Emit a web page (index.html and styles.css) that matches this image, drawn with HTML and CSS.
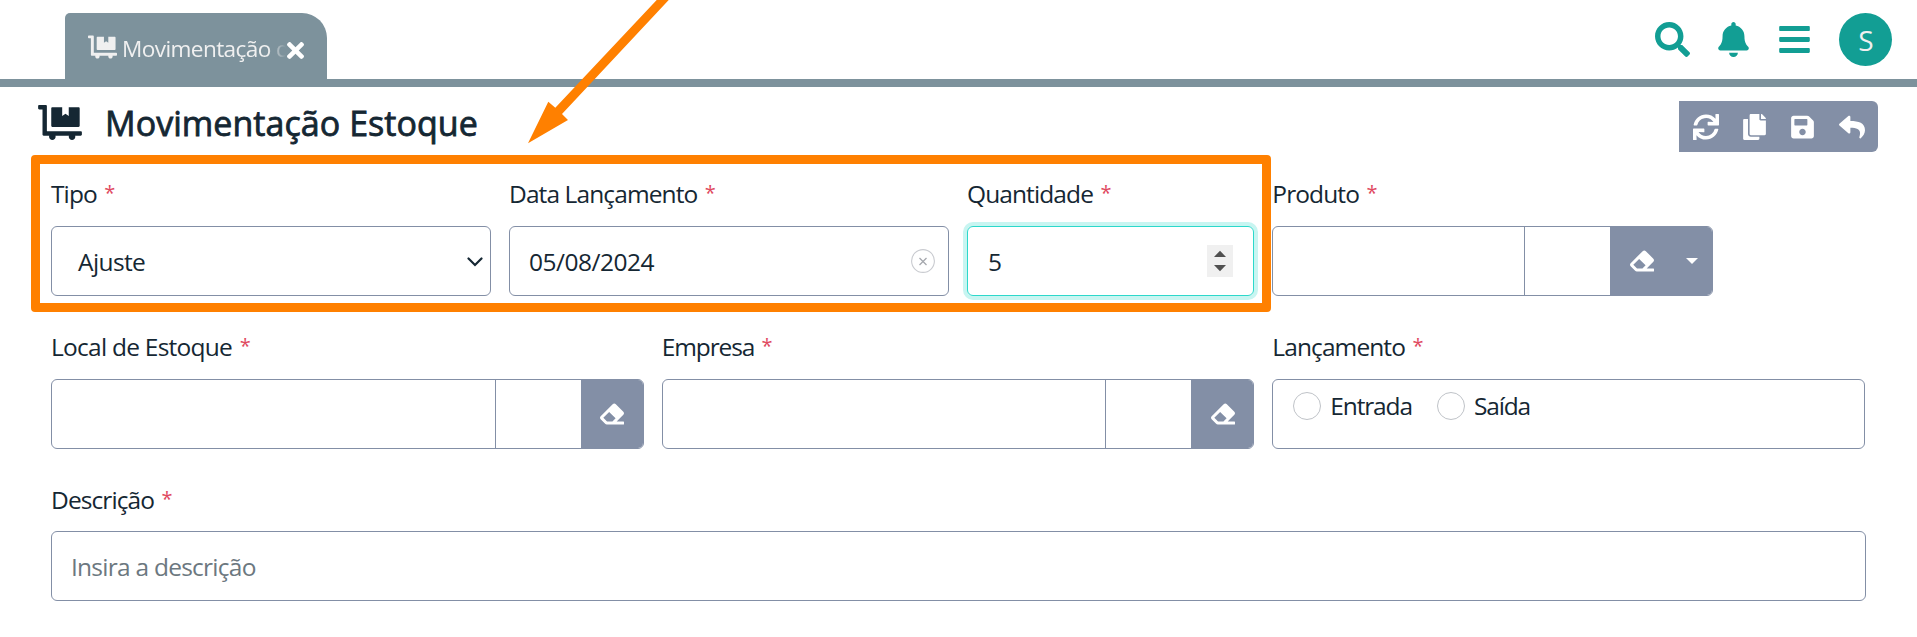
FILE: index.html
```html
<!DOCTYPE html>
<html lang="pt-BR">
<head>
<meta charset="utf-8">
<title>Movimentação Estoque</title>
<link rel="stylesheet" href="styles.css">
</head>
<body>
<svg class="defs" aria-hidden="true">
  <symbol id="dolly" viewBox="0 0 640 512"><path d="M208 320h384c8.800 0 16-7.200 16-16V48c0-8.800-7.200-16-16-16H448v128l-48-32-48 32V32H208c-8.800 0-16 7.200-16 16v256c0 8.800 7.200 16 16 16zm416 64H128V16c0-8.800-7.200-16-16-16H16C7.200 0 0 7.200 0 16v32c0 8.800 7.200 16 16 16h48v368c0 8.800 7.200 16 16 16h82.900c-1.800 5-2.900 10.400-2.900 16 0 26.500 21.500 48 48 48s48-21.500 48-48c0-5.600-1.200-11-2.900-16H451c-1.800 5-2.900 10.400-2.900 16 0 26.500 21.500 48 48 48s48-21.500 48-48c0-5.600-1.200-11-2.900-16H624c8.800 0 16-7.200 16-16v-32c0-8.800-7.200-16-16-16z"/></symbol>
  <symbol id="eraser" viewBox="0 0 512 512"><path d="M497.941 273.941c18.745-18.745 18.745-49.137 0-67.882l-160-160c-18.745-18.745-49.136-18.746-67.883 0l-256 256c-18.745 18.745-18.745 49.137 0 67.882l96 96A48.004 48.004 0 0 0 144 480h356c6.627 0 12-5.373 12-12v-40c0-6.627-5.373-12-12-12H355.883l142.058-142.059zm-302.627-62.627l137.373 137.373L265.373 416H150.628l-80-80 124.686-124.686z"/></symbol>
</svg>

<header class="topbar">
  <div class="tab">
    <svg class="tab-icon"><use href="#dolly"/></svg>
    <span class="tab-title">Movimentação de Estoque</span>
    <svg class="tab-close" viewBox="0 0 352 512"><path d="M242.720 256l100.070-100.070c12.280-12.280 12.280-32.190 0-44.480l-22.240-22.240c-12.280-12.280-32.190-12.280-44.480 0L176 189.280 75.930 89.210c-12.280-12.280-32.190-12.280-44.480 0L9.210 111.450c-12.280 12.280-12.280 32.190 0 44.480L109.280 256 9.210 356.070c-12.280 12.280-12.280 32.190 0 44.480l22.240 22.240c12.280 12.280 32.200 12.280 44.480 0L176 322.720l100.070 100.070c12.280 12.280 32.200 12.280 44.480 0l22.240-22.240c12.280-12.280 12.280-32.190 0-44.480L242.720 256z"/></svg>
  </div>
  <nav class="actions">
    <svg class="search" viewBox="0 0 512 512"><path d="M505 442.700L405.300 343c-4.500-4.500-10.600-7-17-7H372c27.600-35.300 44-79.700 44-128C416 93.100 322.900 0 208 0S0 93.100 0 208s93.100 208 208 208c48.300 0 92.700-16.400 128-44v16.300c0 6.400 2.500 12.500 7 17l99.700 99.700c9.400 9.400 24.600 9.400 33.900 0l28.300-28.300c9.400-9.400 9.400-24.600.1-34zM208 336c-70.700 0-128-57.200-128-128 0-70.700 57.200-128 128-128 70.700 0 128 57.200 128 128 0 70.700-57.200 128-128 128z"/></svg>
    <svg class="bell" viewBox="0 0 448 512"><path d="M224 512c35.320 0 63.970-28.650 63.970-64H160.030c0 35.350 28.650 64 63.970 64zm215.390-149.710c-19.320-20.760-55.470-51.990-55.470-154.290 0-77.700-54.480-139.900-127.940-155.160V32c0-17.670-14.320-32-31.980-32s-31.980 14.330-31.980 32v20.840C118.560 68.100 64.080 130.300 64.080 208c0 102.300-36.150 133.530-55.470 154.290-6 6.450-8.660 14.160-8.610 21.710.11 16.400 12.980 32 32.100 32h383.800c19.120 0 32-15.600 32.100-32 .05-7.550-2.610-15.270-8.610-21.710z"/></svg>
    <svg class="bars" viewBox="0 0 448 512"><path d="M16 132h416c8.837 0 16-7.163 16-16V76c0-8.837-7.163-16-16-16H16C7.163 60 0 67.163 0 76v40c0 8.837 7.163 16 16 16zm0 160h416c8.837 0 16-7.163 16-16v-40c0-8.837-7.163-16-16-16H16c-8.837 0-16 7.163-16 16v40c0 8.837 7.163 16 16 16zm0 160h416c8.837 0 16-7.163 16-16v-40c0-8.837-7.163-16-16-16H16c-8.837 0-16 7.163-16 16v40c0 8.837 7.163 16 16 16z"/></svg>
    <span class="avatar">S</span>
  </nav>
</header>

<main>
  <div class="heading">
    <svg class="heading-icon"><use href="#dolly"/></svg>
    <h1>Movimentação Estoque</h1>
    <div class="toolbar">
      <svg class="sync" viewBox="0 0 512 512"><path d="M440.650 12.570l4 82.770A247.160 247.160 0 0 0 255.830 8C134.730 8 33.910 94.920 12.290 209.820A12 12 0 0 0 24.090 224h49.050a12 12 0 0 0 11.670-9.260 175.910 175.910 0 0 1 317-56.940l-101.460-4.860a12 12 0 0 0-12.570 12v47.410a12 12 0 0 0 12 12H500a12 12 0 0 0 12-12V12a12 12 0 0 0-12-12h-47.370a12 12 0 0 0-11.980 12.570zM255.830 432a175.610 175.610 0 0 1-146-77.800l101.800 4.870a12 12 0 0 0 12.570-12v-47.400a12 12 0 0 0-12-12H12a12 12 0 0 0-12 12V500a12 12 0 0 0 12 12h47.350a12 12 0 0 0 12-12.600l-4.150-82.570A247.170 247.170 0 0 0 255.830 504c121.110 0 221.930-86.920 243.550-201.820a12 12 0 0 0-11.800-14.180h-49.050a12 12 0 0 0-11.670 9.260A175.860 175.860 0 0 1 255.830 432z"/></svg>
      <svg class="copy" viewBox="0 0 448 512"><path d="M320 448v40c0 13.255-10.745 24-24 24H24c-13.255 0-24-10.745-24-24V120c0-13.255 10.745-24 24-24h72v296c0 30.879 25.121 56 56 56h168zm0-344V0H152c-13.255 0-24 10.745-24 24v368c0 13.255 10.745 24 24 24h272c13.255 0 24-10.745 24-24V128H344c-13.200 0-24-10.800-24-24zm120.971-31.029L375.029 7.029A24 24 0 0 0 358.059 0H352v96h96v-6.059a24 24 0 0 0-7.029-16.970z"/></svg>
      <svg class="save" viewBox="0 0 448 512"><path d="M433.941 129.941l-83.882-83.882A48 48 0 0 0 316.118 32H48C21.490 32 0 53.490 0 80v352c0 26.510 21.490 48 48 48h352c26.510 0 48-21.490 48-48V163.882a48 48 0 0 0-14.059-33.941zM224 416c-35.346 0-64-28.654-64-64 0-35.346 28.654-64 64-64s64 28.654 64 64c0 35.346-28.654 64-64 64zm96-304.520V212c0 6.627-5.373 12-12 12H76c-6.627 0-12-5.373-12-12V108c0-6.627 5.373-12 12-12h228.520c3.183 0 6.235 1.264 8.485 3.515l3.480 3.480A11.996 11.996 0 0 1 320 111.480z"/></svg>
      <svg class="reply" viewBox="0 0 512 512"><path d="M8.309 189.836L184.313 37.851C199.719 24.546 224 35.347 224 56.015v80.053c160.629 1.839 288 34.032 288 186.258 0 61.441-39.581 122.309-83.333 154.132-13.653 9.931-33.111-2.533-28.077-18.631 45.344-145.012-21.507-183.510-176.590-185.742V360c0 20.700-24.300 31.453-39.687 18.164l-176.004-152c-11.071-9.562-11.086-26.753 0-36.328z"/></svg>
    </div>
  </div>

  <form class="form">
    <div class="field span3">
      <label>Tipo <i>*</i></label>
      <div class="control select">Ajuste
        <svg class="chevron" viewBox="0 0 16 10"><path d="M1.500 1.500L8 8l6.500-6.500"/></svg></div>
    </div>
    <div class="field span3">
      <label>Data Lançamento <i>*</i></label>
      <div class="control date">05/08/2024
        <svg class="clear" viewBox="0 0 24 24"><circle cx="12" cy="12" r="11.400"/><path d="M8.500 9l7 7M15.500 9l-7 7"/></svg></div>
    </div>
    <div class="field span2">
      <label>Quantidade <i>*</i></label>
      <div class="control number">5
        <svg class="spinner" viewBox="0 0 26 32"><path d="M7 12l6-6.300 6 6.300zM7 20l6 6.300 6-6.300z"/></svg></div>
    </div>
    <div class="field produto">
      <label>Produto <i>*</i></label>
      <div class="control group">
        <div class="code"></div><div class="name"></div>
        <div class="erase"><svg class="eraser"><use href="#eraser"/></svg></div>
        <div class="drop"><svg class="caret" viewBox="0 0 12 6"><path d="M0 0h12L6 6z"/></svg></div>
      </div>
    </div>
    <div class="field span4 local">
      <label>Local de Estoque <i>*</i></label>
      <div class="control group">
        <div class="code"></div><div class="name"></div>
        <div class="erase"><svg class="eraser"><use href="#eraser"/></svg></div>
      </div>
    </div>
    <div class="field span4 empresa">
      <label>Empresa <i>*</i></label>
      <div class="control group">
        <div class="code"></div><div class="name"></div>
        <div class="erase"><svg class="eraser"><use href="#eraser"/></svg></div>
      </div>
    </div>
    <div class="field span4">
      <label>Lançamento <i>*</i></label>
      <div class="control radios">
        <div class="radio"><span class="dot"></span>Entrada</div>
        <div class="radio"><span class="dot"></span>Saída</div>
      </div>
    </div>
    <div class="field span12">
      <label>Descrição <i>*</i></label>
      <div class="control descricao">Insira a descrição</div>
    </div>
  </form>
</main>

<div class="highlight"></div>
<svg class="arrow" viewBox="0 0 1917 637"><path d="M656.700 0L555.300 107.700 548.300 101.700 528 143.300 568 120 562 114 668.700 0z"/></svg>
</body>
</html>
```

FILE: styles.css
```css
* { box-sizing: border-box; }

body {
  margin: 0;
  background: #fff;
  color: #152733;
  font-family: "Open Sans", "Noto Sans", sans-serif;
  font-size: 24.5px;
  letter-spacing: -0.9px;
  position: relative;
  height: 637px;
  overflow: hidden;
}

svg { display: block; fill: currentColor; flex: none; }
.defs { position: absolute; width: 0; height: 0; }

.topbar {
  display: flex;
  justify-content: space-between;
  align-items: flex-end;
  height: 87px;
  padding: 0 25px 0 65px;
  border-bottom: 8px solid #7d929c;
}
.tab {
  display: flex;
  align-items: center;
  width: 262px;
  height: 66px;
  padding: 4px 23px 0;
  border-radius: 5px 25px 0 0;
  background: #7d929c;
  color: #f0f0f0;
  font-size: 22.6px;
  letter-spacing: -0.6px;
}
.tab-icon { width: 29px; height: 24px; margin: -2px 5px 0 0; }
.tab-title {
  width: 164px;
  overflow: hidden;
  white-space: nowrap;
  -webkit-mask-image: linear-gradient(90deg, #000 146px, transparent 164px);
  mask-image: linear-gradient(90deg, #000 146px, transparent 164px);
}
.tab-close { width: 17px; height: 25px; margin: 4px 0 0 1px; color: #fff; }

.actions { display: flex; align-items: center; height: 53px; margin-bottom: 13px; color: #129e94; }
.search { width: 35px; height: 35px; margin-right: 28px; }
.bell { width: 31px; height: 35px; margin-right: 30px; }
.bars { width: 31px; height: 35px; margin-right: 29px; }
.avatar {
  width: 53px;
  height: 53px;
  border-radius: 50%;
  background: #129e94;
  color: #f0f0f0;
  font-size: 28px;
  line-height: 55px;
  text-align: center;
}

.heading { display: flex; height: 83px; padding: 14px 39px 0 38px; }
.heading-icon { width: 44px; height: 35px; margin: 4px 23px 0 0; }
h1 {
  flex: 1;
  margin: 0;
  font-size: 34px;
  font-weight: 400;
  line-height: 44px;
  letter-spacing: 0.05px;
  -webkit-text-stroke: 0.8px currentColor;
}
.toolbar {
  display: flex;
  align-items: center;
  width: 199px;
  height: 51px;
  padding-left: 14px;
  border-radius: 0 6px 6px 0;
  background: #838fa6;
  color: #fff;
}
.toolbar svg { height: 26px; }
.sync { width: 26px; margin-right: 24px; }
.copy { width: 23px; margin-right: 25px; }
.save { width: 23px; margin-right: 25px; }
.reply { width: 26px; }

.form {
  display: grid;
  grid-template-columns: repeat(12, 1fr);
  gap: 26.5px 18px;
  padding: 0 52px 0 51px;
}
.span2 { grid-column: span 2; }
.span3 { grid-column: span 3; }
.span4 { grid-column: span 4; }
.span12 { grid-column: span 12; margin-right: -1px; }
.produto { grid-column: span 4; width: 441px; }

label { display: block; line-height: 47px; margin-bottom: 9px; }
label i {
  margin-left: 2px;
  color: #e04a5f;
  font-size: 20px;
  font-style: normal;
  line-height: 0;
  vertical-align: 3px;
}
.local label { letter-spacing: -0.75px; }
.empresa label { letter-spacing: -1.1px; }
.span12 label { line-height: 49px; margin-bottom: 7px; }

.control {
  display: flex;
  align-items: center;
  height: 70px;
  border: 1px solid #838fa6;
  border-radius: 6px;
  padding: 1px 13px 0 19px;
}
.select { padding: 1px 7px 0 26px; letter-spacing: -0.6px; }
.date { letter-spacing: -0.5px; }
.chevron { width: 16px; height: 10px; margin: 0 0 0 auto; fill: none; stroke: #152733; stroke-width: 2.2; stroke-linecap: round; }
.clear { width: 24px; height: 24px; margin: -1px 0 0 auto; fill: none; stroke: #c9cbd0; stroke-width: 1.1; }
.clear path { stroke: #a5a8ae; stroke-width: 1.3; }
.number { padding-left: 20px; border-color: #2dd8cb; box-shadow: 0 0 0 4px #c8f5f1; }
.spinner { width: 26px; height: 32px; margin: -1px 7px 0 auto; background: #f0f0f0; fill: #505050; }

.group { padding: 0; align-items: stretch; overflow: hidden; }
.code { flex: 1; border-right: 1px solid #838fa6; }
.name { width: 85px; }
.erase, .drop { display: flex; align-items: center; justify-content: center; background: #838fa6; color: #fff; }
.erase { width: 62px; }
.drop { width: 40px; }
.eraser { width: 24px; height: 24px; margin-left: 1px; }
.caret { width: 12px; height: 6px; }

.radios { align-items: flex-start; gap: 25px; padding: 12px 20px 0; letter-spacing: -1.15px; }
.radio { display: flex; align-items: center; height: 28px; line-height: 30px; padding-top: 1px; }
.dot { width: 28px; height: 28px; margin: -1px 9px 0 0; border: 1px solid #bfc3c8; border-radius: 50%; }
.descricao { color: #6c7880; letter-spacing: -0.75px; }

.highlight {
  position: absolute;
  left: 31px;
  top: 155px;
  width: 1240px;
  height: 157px;
  border: 9px solid #ff8000;
  border-radius: 4px;
}
.arrow { position: absolute; left: 0; top: 0; width: 1917px; height: 637px; fill: #ff8000; }
```
